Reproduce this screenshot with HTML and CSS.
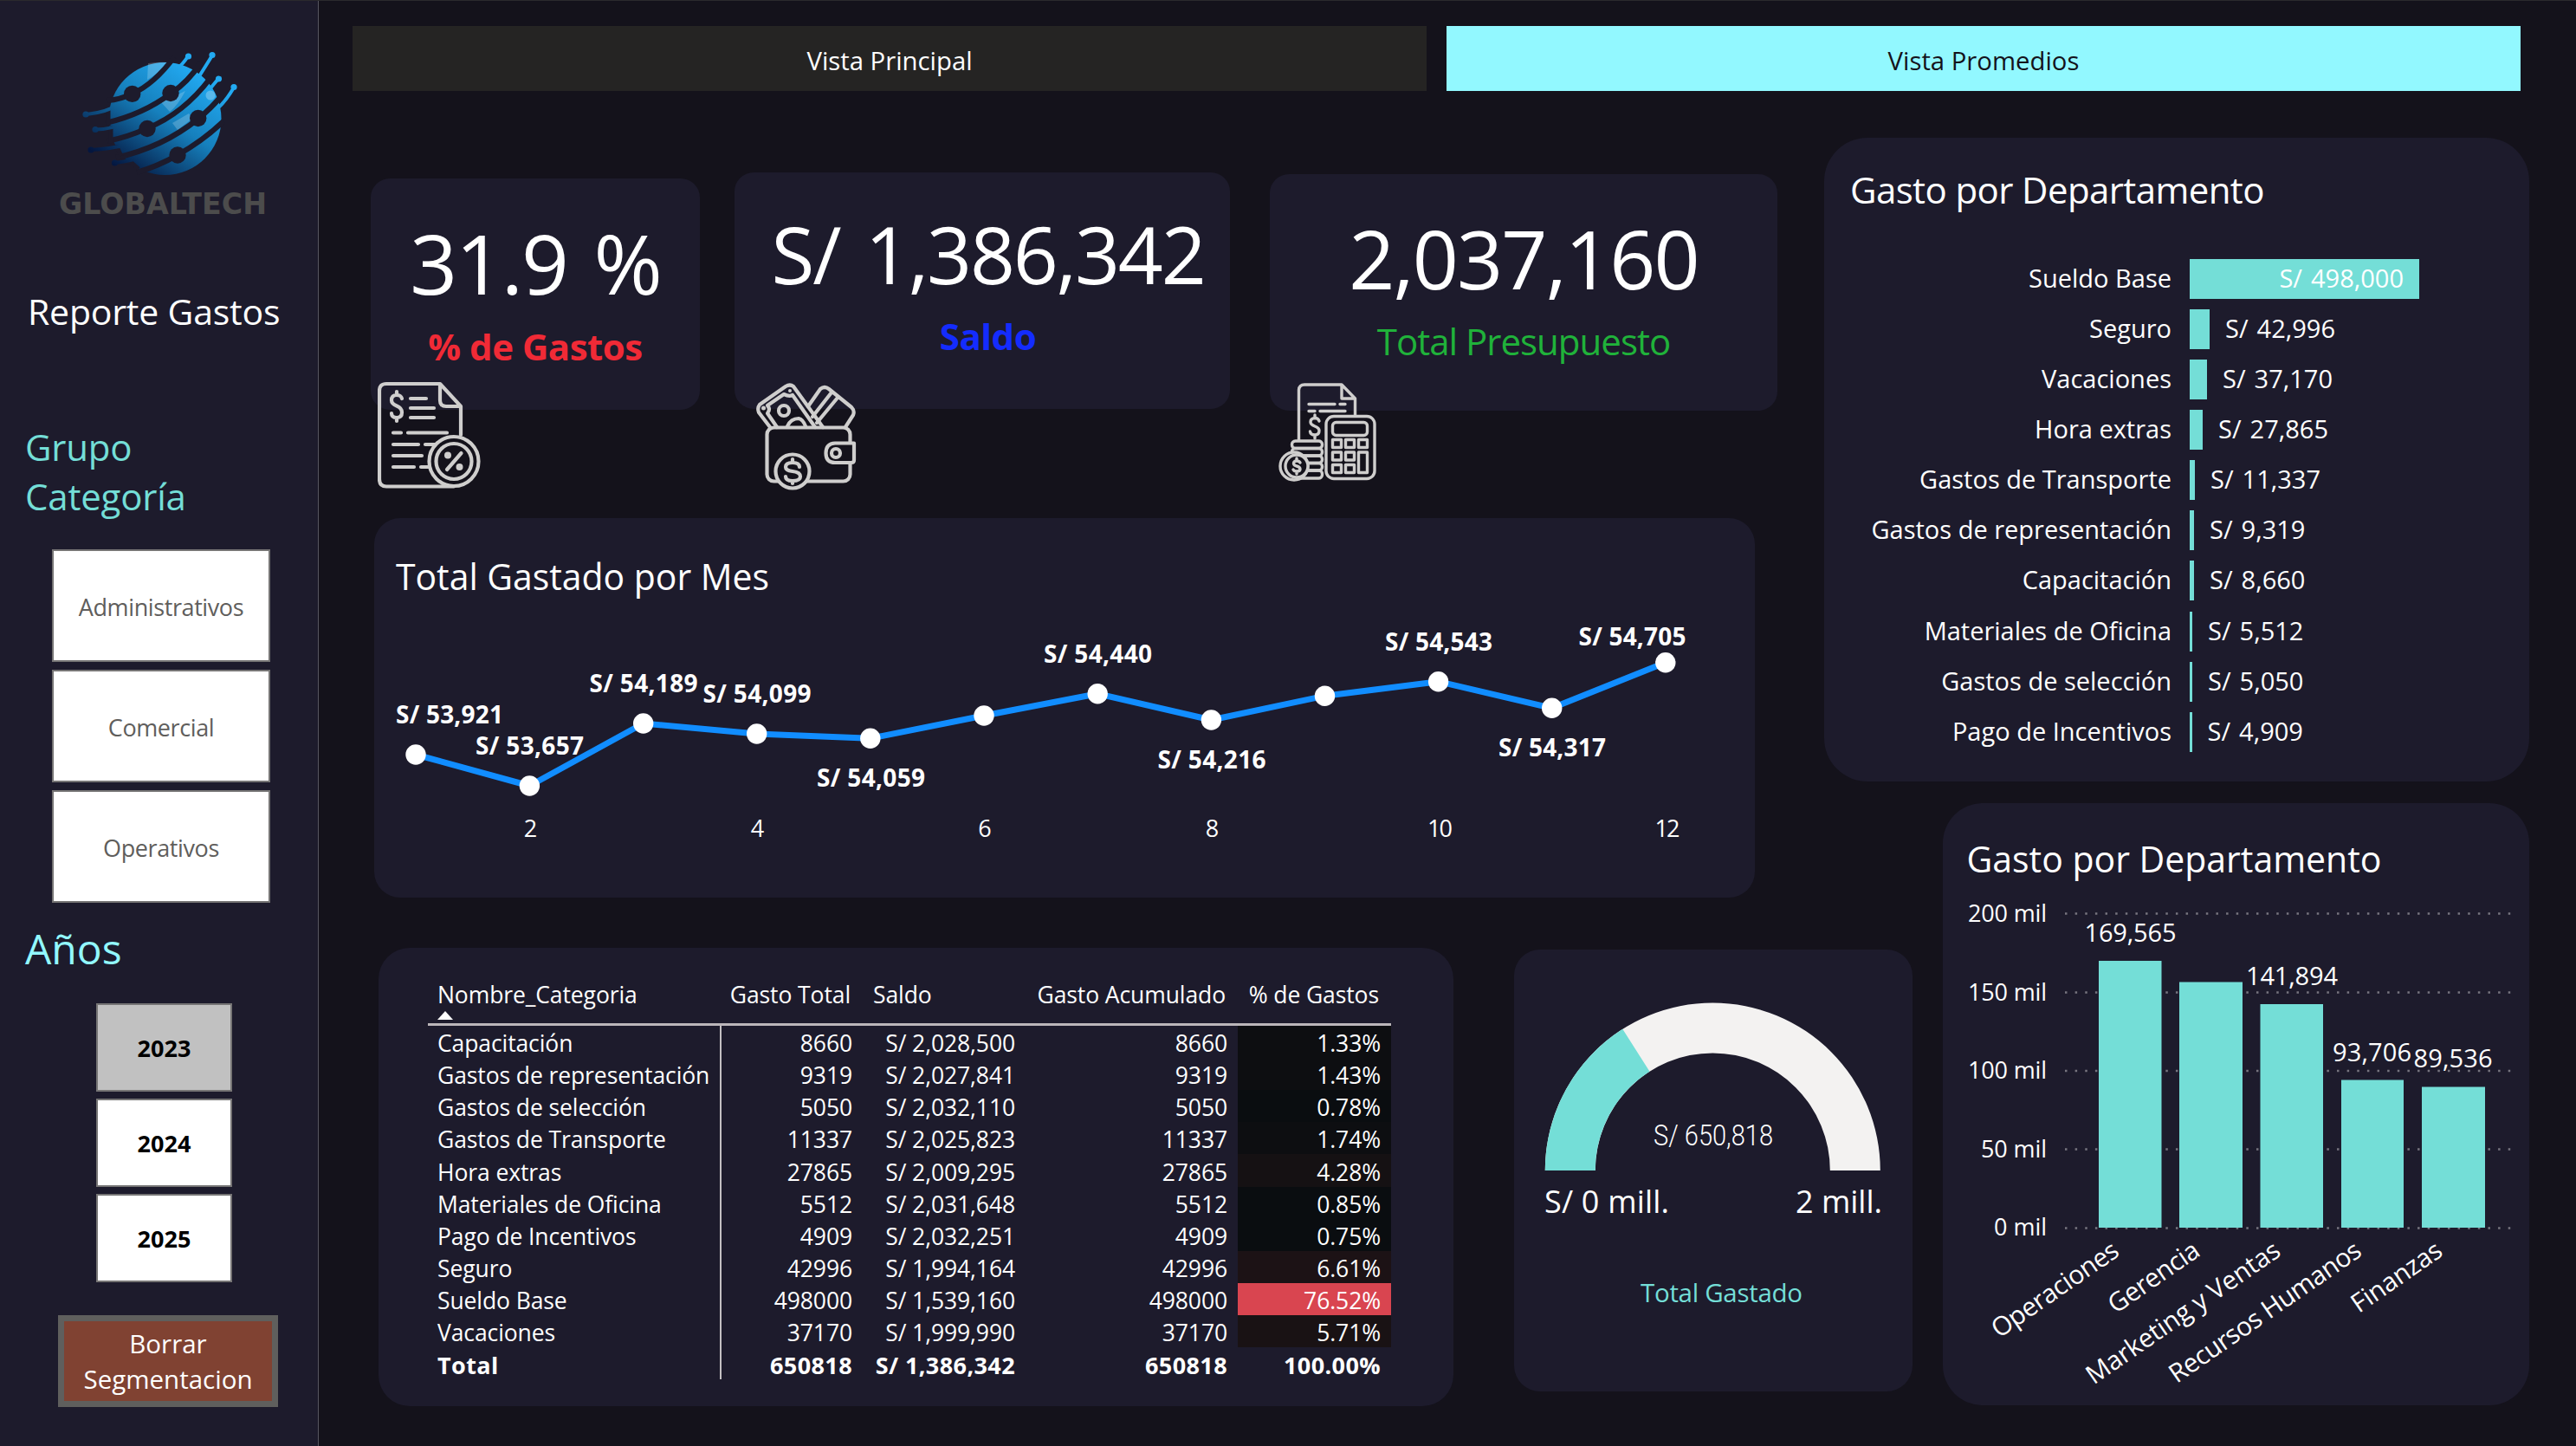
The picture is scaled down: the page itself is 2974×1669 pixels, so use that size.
FILE: index.html
```html
<!DOCTYPE html>
<html lang="es">
<head>
<meta charset="utf-8">
<title>Reporte Gastos</title>
<link rel="stylesheet" href="styles.css">
</head>
<body>
<aside class="sidebar">
  <svg class="logo" viewBox="0 0 367 331" aria-label="Globaltech">
    <defs>
      <linearGradient id="globe" gradientUnits="userSpaceOnUse" x1="225" y1="80" x2="145" y2="200">
        <stop offset="0" stop-color="#22aaf2"/><stop offset=".45" stop-color="#1680bd"/><stop offset="1" stop-color="#04163f"/>
      </linearGradient>
    </defs>
    <circle cx="190.5" cy="137" r="65" fill="url(#globe)"/>
    <path d="M171 73 Q185 71 195 72 Q183 85 170 92Z M186 118 L214 105 Q205 122 196 129Z M199 142 L218 131 L222 137 L205 150Z" fill="#fff" opacity=".2"/>
    <g class="gap">
      <path d="M124 116 Q139 115 153 108 Q178 97 201 66"/>
      <path d="M122 142 Q165 132 197 108 Q217 95 232 72"/>
      <path d="M124 163 Q148 158 170 148 Q212 131 243 90"/>
      <path d="M134 182 Q188 170 229 137 Q246 123 256 110"/>
      <path d="M158 199 Q182 192 205 179 Q235 162 258 140"/>
      <path class="notch" d="M120 127 H125 V145 M125 148 H128 V165 M126 170 H135 L140 180 M140 187 H151 L160 195"/>
      <circle cx="152.7" cy="108.4" r="9.7"/><circle cx="197" cy="107.5" r="9.7"/><circle cx="170" cy="148.5" r="9.7"/><circle cx="228.7" cy="136.5" r="9.7"/><circle cx="205" cy="179" r="9.7"/>
    </g>
    <g class="tail">
      <path d="M100 132 Q122 130 141 119 M110 149.500 Q132 149 157 139 M105 173 Q128 172 150 166 M133 188 Q150 186 168 180"/>
      <path d="M217 65 Q212 73 203 81 M245 64 Q237 77 230 88 M252 91 Q246 98 239 107 M270 101 Q260 118 250 126"/>
    </g>
    <g fill="url(#globe)">
      <circle cx="99" cy="132" r="3.600"/><circle cx="110" cy="149.500" r="3.600"/><circle cx="105" cy="173" r="3.600"/><circle cx="132.500" cy="188" r="3.600"/>
      <circle cx="217.500" cy="65" r="3.600"/><circle cx="245" cy="63.500" r="3.600"/><circle cx="252.500" cy="91" r="3.600"/><circle cx="270" cy="100.500" r="3.600"/>
    </g>
    <circle cx="243" cy="110" r="5.500" fill="#5ab8ea"/>
    <text class="brand" x="68" y="246.500" textLength="240" lengthAdjust="spacingAndGlyphs">GLOBALTECH</text>
  </svg>
  <h1 class="report-title">Reporte Gastos</h1>
  <h2 class="group-title">Grupo Categoría</h2>
  <div class="group-list">
    <button class="tile">Administrativos</button>
    <button class="tile">Comercial</button>
    <button class="tile">Operativos</button>
  </div>
  <h2 class="year-title">Años</h2>
  <div class="year-list">
    <button class="tile year selected">2023</button>
    <button class="tile year">2024</button>
    <button class="tile year">2025</button>
  </div>
  <button class="clear">Borrar<br>Segmentacion</button>
</aside>

<main class="main">
  <nav class="tabs">
    <a class="tab">Vista Principal</a>
    <a class="tab active">Vista Promedios</a>
  </nav>

  <div class="board">
    <div class="left">
      <section class="kpis">
        <article class="card kpi kpi-spent">
          <div class="kpi-value">31.9 %</div>
          <div class="kpi-label">% de Gastos</div>
          <svg class="icon" viewBox="0 0 120 124">
            <path d="M96 62 V29 L72 3 H10 Q2 3 2 11 V113 Q2 121.500 10 121.500 H88 M72 3 V22 Q72 29 79 29 H95"/>
            <path d="M28 20 Q27 16 22 16 Q16 16 16 22 Q16 26 22 28.500 Q28 31 28 36 Q28 42 22 42 Q16 42 16 37 M22 12 V16 M22 42 V46"/>
            <path d="M38 20 H56 M38 31 H65 M38 42 H65 M18 59.500 H27 M35 59.500 H80 M18 73 H47 M55 73 H66 M18 86 H51 M18 99 H42 M50 99 H59"/>
            <circle cx="88" cy="92.500" r="28.500"/><circle cx="88" cy="92.500" r="20.500"/>
            <path d="M80 102 L96.500 83"/>
            <circle class="dot" cx="81" cy="85.500" r="4"/><circle class="dot" cx="94.500" cy="99" r="4"/>
          </svg>
        </article>
        <article class="card kpi kpi-balance">
          <div class="kpi-value">S/ 1,386,342</div>
          <div class="kpi-label">Saldo</div>
          <svg class="icon" viewBox="0 0 116 124">
            <path d="M16 51 L3 34 Q1 29 4 25 L34 4 Q39 1 43 4 L77 51"/>
            <path d="M24 51 L13 35 Q17 30 13 26 L32 13 Q38 16 42 14 L68 51"/>
            <circle cx="32" cy="32" r="6"/><path d="M36 50 Q40 41 49 41 Q54 42 57 50"/>
            <circle class="dot" cx="39" cy="9" r="2"/><circle class="dot" cx="8.500" cy="29" r="2.500"/>
            <path d="M60 27 L74 7 Q79 3 84 7 L110 28 Q114 32 112 37 L103 51 M87 11 L65 39 M94 17 L70 46"/>
            <rect x="12.500" y="51.500" width="96" height="62" rx="8"/>
            <path class="solid" d="M113 69.500 H91 Q80.500 70 80.500 81 Q80.500 92 91 92 H110 Q113 92 113 89Z"/>
            <circle cx="92" cy="81" r="5"/>
            <circle class="solid" cx="42" cy="102" r="19.500"/>
            <path d="M50 97 Q50 92 42 92 Q34 92 34 97 Q34 101 42 102 Q51 103 51 108 Q51 113 42 113 Q34 113 34 108 M42 88 V92 M42 113 V116"/>
          </svg>
        </article>
        <article class="card kpi kpi-budget">
          <div class="kpi-value">2,037,160</div>
          <div class="kpi-label">Total Presupuesto</div>
          <svg class="icon thin" viewBox="0 0 114 114">
            <path d="M23.500 66 V8 Q24 2 30 2 H73 L88.500 18 V37 M73 2 V18 H88"/>
            <path d="M35 24.500 H65 M71 24.500 H77 M35 32.500 H42 M48 32.500 H77"/>
            <path d="M47 44 Q46 40.500 42 40.500 Q37 41 37 45 Q37 48 42 50 Q47 52 47 55 Q47 60 42 60 Q37 60 36.500 56 M42 37 V40 M42 60 V64"/>
            <rect x="55" y="38.500" width="56" height="72" rx="9"/>
            <rect x="62.500" y="45.500" width="40" height="15" rx="4"/>
            <path d="M62.500 65.500 h10 v9 h-10z M77.500 65.500 h10 v9 h-10z M92.500 65.500 h10 v9 h-10z M62.500 80 h10 v9 h-10z M77.500 80 h10 v9 h-10z M62.500 94.500 h10 v9 h-10z M77.500 94.500 h10 v9 h-10z M92.500 80 h10 v23.500 h-10z"/>
            <rect x="15.500" y="67" width="35" height="8.500" rx="4"/><rect x="15.500" y="75.500" width="35" height="8.500" rx="4"/>
            <rect x="20" y="84" width="30.500" height="8.500" rx="4"/><rect x="20" y="92.500" width="30.500" height="8.500" rx="4"/><rect x="15" y="101" width="35.500" height="9" rx="4"/>
            <circle class="solid" cx="18" cy="96" r="16"/><circle class="solid" cx="21" cy="96" r="13"/>
            <path d="M25 92 Q24 90 21 90 Q17.500 90 17.500 93 Q18 95.500 21 96 Q25 97 25 99.500 Q25 102 21 102 Q18 102 17 100 M21 87 V90 M21 102 V105"/>
          </svg>
        </article>
      </section>

      <section class="card line-card">
        <svg viewBox="432 598 1594 438" class="chart">
          <text class="t42" x="457" y="681" textLength="431" lengthAdjust="spacingAndGlyphs">Total Gastado por Mes</text>
          <polyline class="series" points="480,871 611.400,907 742.700,835 873.700,847 1004.800,852.300 1136,826 1267.200,800.700 1398.400,831 1529.500,803.300 1660.600,786.700 1791.700,817.300 1922.800,764.700"/>
          <g class="marker">
            <circle cx="480" cy="871" r="11.700"/><circle cx="611.400" cy="907" r="11.700"/><circle cx="742.700" cy="835" r="11.700"/><circle cx="873.700" cy="847" r="11.700"/><circle cx="1004.800" cy="852.300" r="11.700"/><circle cx="1136" cy="826" r="11.700"/><circle cx="1267.200" cy="800.700" r="11.700"/><circle cx="1398.400" cy="831" r="11.700"/><circle cx="1529.500" cy="803.300" r="11.700"/><circle cx="1660.600" cy="786.700" r="11.700"/><circle cx="1791.700" cy="817.300" r="11.700"/><circle cx="1922.800" cy="764.700" r="11.700"/>
          </g>
          <g class="point-label">
            <text x="457" y="835" textLength="124">S/ 53,921</text>
            <text x="549" y="871" textLength="125">S/ 53,657</text>
            <text x="680.500" y="799" textLength="125">S/ 54,189</text>
            <text x="811.500" y="811" textLength="125">S/ 54,099</text>
            <text x="943" y="908" textLength="125">S/ 54,059</text>
            <text x="1205" y="765" textLength="125">S/ 54,440</text>
            <text x="1336.500" y="887" textLength="125">S/ 54,216</text>
            <text x="1599" y="751" textLength="124">S/ 54,543</text>
            <text x="1730" y="873" textLength="124">S/ 54,317</text>
            <text x="1822.500" y="745" textLength="124">S/ 54,705</text>
          </g>
          <g class="axis mid">
            <text x="612.500" y="966">2</text><text x="874.500" y="966">4</text><text x="1137" y="966">6</text><text x="1399.500" y="966">8</text><text x="1662.500" y="966" textLength="29">10</text><text x="1925" y="966" textLength="29">12</text>
          </g>
        </svg>
      </section>

      <div class="bottom">
        <section class="card table-card">
          <table class="grid">
            <colgroup><col class="c-name"><col class="c-spent"><col class="c-saldo"><col class="c-accum"><col class="c-pct"></colgroup>
            <thead><tr><th class="sorted">Nombre_Categoria</th><th class="num">Gasto Total</th><th>Saldo</th><th class="num">Gasto Acumulado</th><th class="num">% de Gastos</th></tr></thead>
            <tbody>
              <tr><td>Capacitación</td><td>8660</td><td>S/ 2,028,500</td><td>8660</td><td class="h2">1.33%</td></tr>
              <tr><td>Gastos de representación</td><td>9319</td><td>S/ 2,027,841</td><td>9319</td><td class="h2">1.43%</td></tr>
              <tr><td>Gastos de selección</td><td>5050</td><td>S/ 2,032,110</td><td>5050</td><td class="h1">0.78%</td></tr>
              <tr><td>Gastos de Transporte</td><td>11337</td><td>S/ 2,025,823</td><td>11337</td><td class="h2">1.74%</td></tr>
              <tr><td>Hora extras</td><td>27865</td><td>S/ 2,009,295</td><td>27865</td><td class="h3">4.28%</td></tr>
              <tr><td>Materiales de Oficina</td><td>5512</td><td>S/ 2,031,648</td><td>5512</td><td class="h1">0.85%</td></tr>
              <tr><td>Pago de Incentivos</td><td>4909</td><td>S/ 2,032,251</td><td>4909</td><td class="h1">0.75%</td></tr>
              <tr><td>Seguro</td><td>42996</td><td>S/ 1,994,164</td><td>42996</td><td class="h5">6.61%</td></tr>
              <tr><td>Sueldo Base</td><td>498000</td><td>S/ 1,539,160</td><td>498000</td><td class="h6">76.52%</td></tr>
              <tr><td>Vacaciones</td><td>37170</td><td>S/ 1,999,990</td><td>37170</td><td class="h4">5.71%</td></tr>
            </tbody>
            <tfoot><tr><td>Total</td><td>650818</td><td>S/ 1,386,342</td><td>650818</td><td>100.00%</td></tr></tfoot>
          </table>
        </section>

        <section class="card gauge-card">
          <svg viewBox="1748 1097 460 510" class="chart">
            <path fill="#f3f2f1" d="M1783.800 1352 A193.500 193.500 0 0 1 2170.800 1352 H2112.800 A135.500 135.500 0 0 0 1841.800 1352Z"/>
            <path fill="#74ded7" d="M1783.800 1352 A193.500 193.500 0 0 1 1873.300 1188.800 L1904.500 1237.700 A135.500 135.500 0 0 0 1841.800 1352Z"/>
            <text class="gauge-value" x="1909" y="1323" textLength="138" lengthAdjust="spacingAndGlyphs">S/ 650,818</text>
            <text class="gauge-limit" x="1783" y="1401" textLength="144">S/ 0 mill.</text>
            <text class="gauge-limit" x="2073" y="1401" textLength="100">2 mill.</text>
            <text class="gauge-name" x="1894" y="1504" textLength="187">Total Gastado</text>
          </svg>
        </section>
      </div>
    </div>

    <section class="card bars-card">
      <h3 class="card-title">Gasto por Departamento</h3>
      <div class="bars">
        <span class="cat">Sueldo Base</span><div class="track"><i class="bar inside" style="width:265px"><b>S/ 498,000</b></i></div>
        <span class="cat">Seguro</span><div class="track"><i class="bar" style="width:23px"></i><b>S/ 42,996</b></div>
        <span class="cat">Vacaciones</span><div class="track"><i class="bar" style="width:20px"></i><b>S/ 37,170</b></div>
        <span class="cat">Hora extras</span><div class="track"><i class="bar" style="width:15px"></i><b>S/ 27,865</b></div>
        <span class="cat">Gastos de Transporte</span><div class="track"><i class="bar" style="width:6px"></i><b>S/ 11,337</b></div>
        <span class="cat">Gastos de representación</span><div class="track"><i class="bar" style="width:5px"></i><b>S/ 9,319</b></div>
        <span class="cat">Capacitación</span><div class="track"><i class="bar" style="width:5px"></i><b>S/ 8,660</b></div>
        <span class="cat">Materiales de Oficina</span><div class="track"><i class="bar" style="width:3px"></i><b>S/ 5,512</b></div>
        <span class="cat">Gastos de selección</span><div class="track"><i class="bar" style="width:3px"></i><b>S/ 5,050</b></div>
        <span class="cat">Pago de Incentivos</span><div class="track"><i class="bar" style="width:2.500px"></i><b>S/ 4,909</b></div>
      </div>
    </section>

    <section class="card columns-card">
      <svg viewBox="2243 927 677 695" class="chart">
        <text class="t42" x="2270.500" y="1007" textLength="479" lengthAdjust="spacingAndGlyphs">Gasto por Departamento</text>
        <path class="rule" d="M2384 1054.500 H2900 M2384 1145.500 H2900 M2384 1236 H2900 M2384 1326.500 H2900 M2384 1417.500 H2900"/>
        <g fill="#74ded7">
          <rect x="2423" y="1109" width="72.500" height="308"/><rect x="2516" y="1133.500" width="73" height="283.500"/><rect x="2609.500" y="1159" width="72.500" height="258"/><rect x="2703" y="1246.500" width="72" height="170.500"/><rect x="2796" y="1254.500" width="73" height="162.500"/>
        </g>
        <g class="axis end">
          <text x="2363" y="1063.500" textLength="91">200 mil</text><text x="2363" y="1154.500" textLength="91">150 mil</text><text x="2363" y="1245" textLength="91">100 mil</text><text x="2363" y="1335.500" textLength="76">50 mil</text><text x="2363" y="1426" textLength="61">0 mil</text>
        </g>
        <g class="col-label mid">
          <text x="2459.500" y="1087" textLength="106">169,565</text><text x="2646" y="1137" textLength="106">141,894</text><text x="2738.500" y="1225" textLength="91">93,706</text><text x="2832" y="1232" textLength="91">89,536</text>
        </g>
        <g class="col-name end">
          <text transform="translate(2448.500 1448) rotate(-34.700)" textLength="171">Operaciones</text>
          <text transform="translate(2542 1448) rotate(-34.700)" textLength="121">Gerencia</text>
          <text transform="translate(2635 1448) rotate(-34.700)" textLength="265">Marketing y Ventas</text>
          <text transform="translate(2728.500 1448) rotate(-34.700)" textLength="262">Recursos Humanos</text>
          <text transform="translate(2822 1448) rotate(-34.700)" textLength="120">Finanzas</text>
        </g>
      </svg>
    </section>
  </div>
</main>
</body>
</html>
```
FILE: styles.css
```css
* { box-sizing: border-box; }

body {
  margin: 0;
  width: 2974px;
  height: 1669px;
  display: flex;
  overflow: hidden;
  background: #14121b;
  border-top: 1px solid #2b2a2d;
  color: #fff;
  font-family: "Open Sans", "Noto Sans", sans-serif;
}

h1, h2, h3 { margin: 0; font-weight: 400; }
button { font-family: inherit; padding: 0; border-radius: 0; }

/* Sidebar */
.sidebar {
  width: 368px;
  height: 1668px;
  background: #1d1b2c;
  border-right: 1px solid #565560;
  display: flex;
  flex-direction: column;
}
.logo { width: 367px; height: 331px; margin-top: -1px; flex: none; }
.gap path { fill: none; stroke: #1d1b2c; stroke-width: 6.200; }
.gap .notch { stroke-width: 5; }
.gap circle { fill: #1d1b2c; }
.tail path { fill: none; stroke: url(#globe); stroke-width: 4; }
.brand { font: 700 33px "DejaVu Sans", sans-serif; }
.report-title { margin-left: 32px; font-size: 41px; line-height: 56px; letter-spacing: -0.2px; white-space: nowrap; }
.group-title { margin: 100px 100px 0 29px; font-size: 42px; line-height: 57px; letter-spacing: -0.2px; color: #74ded7; }
.group-list { margin: 33px 0 0 60px; display: grid; gap: 9px; width: 252px; }
.tile { height: 130px; padding-top: 2px; background: #fff; border: 2px solid #767575; color: #605e5c; font-size: 27px; letter-spacing: -0.4px; }
.year-title { margin: 23px 0 0 29px; font-size: 48px; line-height: 60px; color: #92f8ff; }
.year-list { margin: 33px 0 0 111px; display: grid; gap: 8px; width: 157px; }
.year { height: 102px; padding-top: 0; letter-spacing: 0; font-weight: 700; color: #000; }
.selected { background: #c1c1c1; }
.clear {
  margin: 38px 0 0 67px;
  width: 254px;
  height: 106px;
  flex: none;
  border: 7px solid #5f5f5d;
  background: #804232;
  color: #fff;
  font-size: 29.500px;
  line-height: 41px;
}

/* Header tabs */
.main { flex: 1; display: flex; flex-direction: column; }
.tabs { display: flex; gap: 23px; padding: 29px 0 0 39px; }
.tab { width: 1240px; height: 75px; background: #252423; font-size: 29.300px; line-height: 80px; text-align: center; }
.active { background: #92f8ff; color: #14121b; }

/* Board: the right-hand cards share columns with the bottom row on the left */
.board {
  margin: 54px 0 0 60px;
  display: grid;
  grid-template-columns: 1678px 137px 677px;
  grid-template-rows: 743px 695px;
  row-gap: 25px;
}
.left { grid-area: 1 / 1 / 3 / 3; display: flex; flex-direction: column; }
.bars-card { grid-area: 1 / 2 / 2 / 4; border-radius: 50px; }
.columns-card { grid-area: 2 / 3 / 3 / 4; border-radius: 46px; }
.card { background: #1d1b2c; }
.chart { display: block; width: 100%; height: 100%; }

/* KPI cards */
.kpis { height: 439px; flex: none; display: flex; align-items: flex-start; }
.kpi { position: relative; border-radius: 22px; text-align: center; white-space: nowrap; }
.kpi-value { line-height: 100px; letter-spacing: -0.024em; word-spacing: 8px; }
.kpi-label { line-height: 50px; font-size: 42px; letter-spacing: -0.5px; }
.kpi-spent { width: 380px; height: 267px; margin-top: 47px; padding-top: 47px; }
.kpi-spent .kpi-value { font-size: 96px; letter-spacing: -0.022em; }
.kpi-spent .kpi-label { margin-top: 22px; color: #f02a36; font-weight: 700; }
.kpi-balance { width: 572px; height: 273px; margin: 40px 0 0 40px; padding: 44px 0 0 13px; }
.kpi-balance .kpi-value { font-size: 91px; }
.kpi-balance .kpi-label { margin-top: 20px; color: #142cff; font-weight: 700; }
.kpi-budget { width: 586px; height: 273px; margin: 42px 0 0 46px; padding-top: 47px; }
.kpi-budget .kpi-value { font-size: 93px; letter-spacing: -0.02em; }
.kpi-budget .kpi-label { margin-top: 21px; color: #20b23a; letter-spacing: -1px; }
.icon { position: absolute; fill: none; stroke: #cfcecd; stroke-width: 4.200; stroke-linecap: round; stroke-linejoin: round; }
.icon .dot { fill: #cfcecd; stroke: none; }
.icon .solid { fill: #14121b; }
.icon.thin { stroke-width: 3.400; }
.kpi-spent .icon { left: 8px; top: 234px; width: 120px; height: 124px; }
.kpi-balance .icon { left: 25px; top: 243px; width: 116px; height: 124px; }
.kpi-budget .icon { left: 10px; top: 241px; width: 114px; height: 114px; }

/* Line chart */
.line-card { margin-left: 4px; width: 1594px; height: 438px; flex: none; border-radius: 30px; }
text { fill: #fff; }
text.brand { fill: #4c4c4c; }
.t42 { font-size: 42px; }
.series { fill: none; stroke: #118dff; stroke-width: 7; stroke-linejoin: round; }
.marker { fill: #fff; }
.point-label { font-size: 28px; font-weight: 700; }
.axis { font-size: 27px; }
.mid { text-anchor: middle; }
.end { text-anchor: end; }

/* Bottom row */
.bottom { display: flex; align-items: flex-start; flex: none; margin: 58px 0 0 9px; }
.table-card { width: 1241px; height: 529px; border-radius: 36px; padding: 35px 0 0 57px; }
.grid { width: 1112px; table-layout: fixed; border-collapse: separate; border-spacing: 0; font-size: 26.500px; letter-spacing: -0.1px; white-space: nowrap; }
.c-name { width: 339px; }
.c-spent { width: 163px; }
.c-saldo { width: 188px; }
.c-accum { width: 245px; }
.c-pct { width: 177px; }
.grid th { height: 55px; padding: 0 0 0 12px; border-bottom: 3px solid #bbb6ba; font-weight: 400; text-align: left; vertical-align: top; line-height: 38px; }
.grid th:first-child { padding-left: 11px; }
.grid th.num { text-align: right; padding: 0 14px 0 0; }
.sorted::after { content: ""; display: block; width: 0; border: solid transparent; border-width: 0 9.500px 10px; border-bottom-color: #fff; }
.grid td { height: 37px; padding: 4px 12px 0 0; line-height: 33px; text-align: right; }
.grid tr:nth-child(5) td { height: 38px; }
.grid td:first-child { text-align: left; padding-left: 11px; padding-right: 0; border-right: 2px solid #c4c0c2; }
.grid tfoot td { font-weight: 700; font-size: 27px; letter-spacing: 0.4px; }
.h1 { background: #0a0d10; }
.h2 { background: #0d0e11; }
.h3 { background: #151113; }
.h4 { background: #191214; }
.h5 { background: #1c1215; }
.h6 { background: #d94550; }

/* Gauge */
.gauge-card { margin: 2px 0 0 70px; width: 460px; height: 510px; flex: none; border-radius: 30px; }
.gauge-value { font: 300 33px Roboto, sans-serif; }
.gauge-limit { font-size: 36px; }
text.gauge-name { font-size: 29.500px; fill: #74ded7; }

/* Horizontal bars */
.card-title { padding: 30px 0 0 30px; font-size: 42px; line-height: 60px; letter-spacing: -0.6px; }
.bars { margin-top: 50px; display: grid; grid-template-columns: 401px 1fr; grid-auto-rows: 46px; gap: 12.080px 21px; font-size: 29px; line-height: 44px; }
.cat { text-align: right; white-space: nowrap; }
.track { display: flex; }
.track b { font-weight: 400; margin-left: 18px; font-style: normal; word-spacing: 2.500px; white-space: nowrap; }
.bar { display: block; height: 46px; background: #74ded7; }
.inside { text-align: right; padding-right: 18px; font-style: normal; }

/* Columns */
.rule { fill: none; stroke: #77757f; stroke-width: 2.500; stroke-dasharray: 2.500 9.130; }
.col-label { font-size: 29px; }
.col-name { font-size: 30px; }
```
